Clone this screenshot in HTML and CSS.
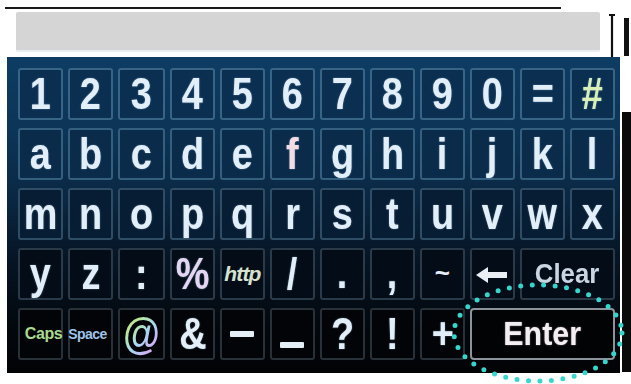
FILE: index.html
```html
<!DOCTYPE html>
<html>
<head>
<meta charset="utf-8">
<link rel="stylesheet" href="styles.css">
</head>
<body>
<div class="screen">
  <div class="top">
    <div class="topline"></div>
    <div class="inputrow">
      <div class="field"></div>
      <svg class="cursor" width="8" height="48" viewBox="0 0 8 48"><path d="M1 1h6M4 1v46M1 47h6" stroke="#111" stroke-width="2.2" fill="none"/></svg>
      <div class="mark"></div>
    </div>
  </div>
  <div class="main">
    <div class="panel">
      <div class="keys">
        <div class="key r1"><span class="lbl">1</span></div>
        <div class="key r1"><span class="lbl">2</span></div>
        <div class="key r1"><span class="lbl">3</span></div>
        <div class="key r1"><span class="lbl">4</span></div>
        <div class="key r1"><span class="lbl">5</span></div>
        <div class="key r1"><span class="lbl">6</span></div>
        <div class="key r1"><span class="lbl">7</span></div>
        <div class="key r1"><span class="lbl">8</span></div>
        <div class="key r1"><span class="lbl">9</span></div>
        <div class="key r1"><span class="lbl">0</span></div>
        <div class="key r1"><span class="lbl">=</span></div>
        <div class="key r1"><span class="lbl hash">#</span></div>

        <div class="key r2"><span class="lbl">a</span></div>
        <div class="key r2"><span class="lbl">b</span></div>
        <div class="key r2"><span class="lbl">c</span></div>
        <div class="key r2"><span class="lbl">d</span></div>
        <div class="key r2"><span class="lbl">e</span></div>
        <div class="key r2"><span class="lbl pinkish">f</span></div>
        <div class="key r2"><span class="lbl">g</span></div>
        <div class="key r2"><span class="lbl">h</span></div>
        <div class="key r2"><span class="lbl">i</span></div>
        <div class="key r2"><span class="lbl">j</span></div>
        <div class="key r2"><span class="lbl">k</span></div>
        <div class="key r2"><span class="lbl">l</span></div>

        <div class="key r3"><span class="lbl">m</span></div>
        <div class="key r3"><span class="lbl">n</span></div>
        <div class="key r3"><span class="lbl">o</span></div>
        <div class="key r3"><span class="lbl">p</span></div>
        <div class="key r3"><span class="lbl">q</span></div>
        <div class="key r3"><span class="lbl">r</span></div>
        <div class="key r3"><span class="lbl">s</span></div>
        <div class="key r3"><span class="lbl">t</span></div>
        <div class="key r3"><span class="lbl">u</span></div>
        <div class="key r3"><span class="lbl">v</span></div>
        <div class="key r3"><span class="lbl">w</span></div>
        <div class="key r3"><span class="lbl">x</span></div>

        <div class="key r4"><span class="lbl">y</span></div>
        <div class="key r4"><span class="lbl">z</span></div>
        <div class="key r4"><span class="lbl">:</span></div>
        <div class="key r4"><span class="lbl pct">%</span></div>
        <div class="key r4"><span class="http">http</span></div>
        <div class="key r4"><span class="lbl">/</span></div>
        <div class="key r4 low"><span class="lbl">.</span></div>
        <div class="key r4 low"><span class="lbl">,</span></div>
        <div class="key r4"><span class="tilde">~</span></div>
        <div class="key r4"><svg class="arrow" width="32" height="18" viewBox="0 0 32 18"><path d="M0 9L12 1V6H31V12H12V17Z" fill="#e9eff5"/></svg></div>
        <div class="key r4 span2"><span class="clear">Clear</span></div>

        <div class="key r5"><span class="caps">Caps</span></div>
        <div class="key r5"><span class="space">Space</span></div>
        <div class="key r5"><span class="lbl at">@</span></div>
        <div class="key r5"><span class="lbl">&amp;</span></div>
        <div class="key r5"><span class="dash"></span></div>
        <div class="key r5 under"><span class="dash"></span></div>
        <div class="key r5"><span class="lbl">?</span></div>
        <div class="key r5"><span class="lbl">!</span></div>
        <div class="key r5"><span class="lbl">+</span></div>
        <div class="key enter span3"><span class="enterlbl">Enter</span></div>
      </div>
    </div>
    <div class="strip"></div>
  </div>
  <div class="bottomline"></div>
  <svg class="ring" width="190" height="110" viewBox="0 0 190 110"><ellipse cx="95" cy="55" rx="84" ry="48" fill="none" stroke="#36d6cc" stroke-width="5" stroke-linecap="round" stroke-dasharray="0 11.5"/></svg>
</div>
</body>
</html>
```
FILE: styles.css
```css
* { box-sizing: border-box; }
html, body { margin: 0; padding: 0; background: #ffffff; }
body { width: 631px; height: 384px; overflow: hidden; font-family: "Liberation Sans", Arial, sans-serif; }
.screen { position: relative; width: 631px; height: 384px; }

.top { height: 57px; padding-top: 7px; }
.topline { margin-left: 5px; width: 556px; height: 2px; background: #1a1a1a; }
.inputrow { display: flex; align-items: flex-start; margin-top: 3px; }
.field { margin-left: 16px; width: 584px; height: 40px; background: #d5d5d5; border-radius: 2px; border-bottom: 2px solid #e9eef2; }
.cursor { margin-left: 8px; margin-top: 2px; }
.mark { margin-left: 8px; margin-top: 6px; width: 5px; height: 38px; background: #111; }

.main { display: flex; align-items: flex-start; }
.panel {
  margin-left: 7px; width: 613px; height: 316px;
  padding: 11px 5px 13px 11px;
  background: linear-gradient(180deg, #0e3c63 0%, #0c3456 25%, #0a2742 45%, #061423 65%, #03080e 85%, #020305 100%);
}
.strip { margin-left: 2px; margin-top: 55px; width: 9px; height: 260px; background: #0a0a0a; }
.bottomline { margin-left: 160px; width: 133px; height: 2px; background: #d0d0d0; margin-top: -2px; }

.keys {
  display: grid;
  grid-template-columns: repeat(12, 1fr);
  grid-template-rows: repeat(5, 52px);
  column-gap: 5px; row-gap: 8px;
}
.key {
  display: flex; align-items: center; justify-content: center;
  border: 2px solid #3e6b8b; border-radius: 3px;
  overflow: visible; color: #e4f0fa;
}
.r1 { background: #0b2f51; border-color: #386585; }
.r2 { background: #0a2b4a; border-color: #345f7e; }
.r3 { background: #071d33; border-color: #2f4d64; }
.r4 { background: #040d17; border-color: #2a3a48; }
.r5 { background: #020407; border-color: #283038; }
.span2 { grid-column: span 2; }
.span3 { grid-column: span 3; }
.low { align-items: flex-end; padding-bottom: 3px; }
.under { align-items: flex-end; padding-bottom: 10px; }

.lbl {
  display: inline-block; font-weight: bold; font-size: 44px; line-height: 1;
  transform: scaleX(0.86); color: #e2eff9;
  text-shadow: 0 0 2px rgba(170, 210, 240, 0.5);
}
.hash { color: #d9efb8; }
.pinkish { color: #f2dde6; }
.pct { color: #e4d6f2; }
.http { font-weight: bold; font-style: italic; font-size: 21px; color: #d6e2cf; letter-spacing: -0.8px; }
.tilde { font-weight: bold; font-size: 26px; color: #e4eef6; margin-top: -2px; }
.arrow { margin-top: 2px; }
.clear { font-weight: bold; font-size: 28px; color: #c9d5e2; transform: scaleX(0.92); }
.caps { font-weight: bold; font-size: 16px; color: #a9d98f; letter-spacing: -0.4px; margin-right: -6px; }
.space { font-weight: bold; font-size: 14px; color: #9ec3e6; letter-spacing: -0.5px; margin-left: -6px; }
.at {
  background: linear-gradient(135deg, #f0d090 0%, #b8e89a 30%, #a8d8f4 55%, #d0b0f4 80%, #f4b8d4 100%);
  -webkit-background-clip: text; background-clip: text; color: transparent; text-shadow: none;
}
.dash { display: block; width: 24px; height: 6px; background: #e4eef6; border-radius: 1px; }

.enter { background: #020304; border: 2px solid #8d939a; border-radius: 4px; }
.enterlbl { font-weight: bold; font-size: 33px; color: #f2eef2; transform: scaleX(0.92); text-shadow: 0 0 2px rgba(255, 220, 240, 0.5); }

.ring { position: absolute; left: 443px; top: 278px; }
```
